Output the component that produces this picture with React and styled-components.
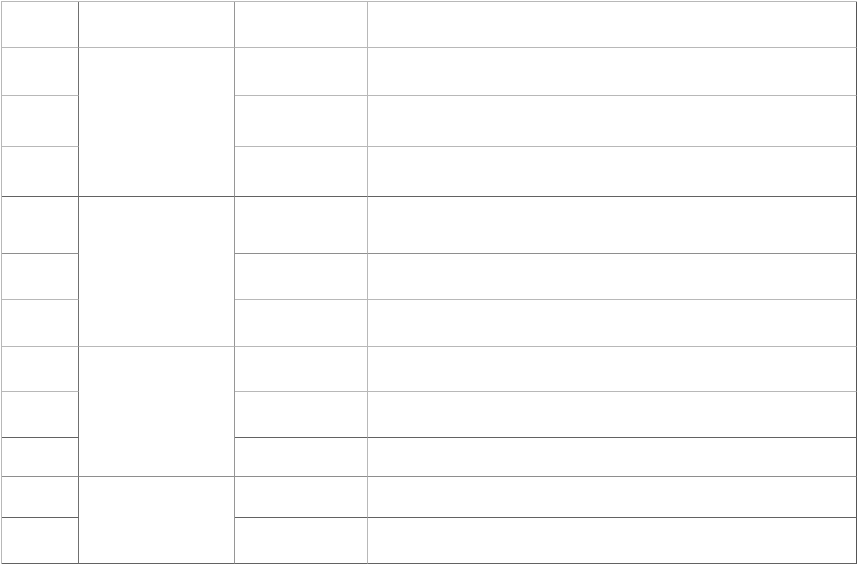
import React from "react";
import styled, { createGlobalStyle } from "styled-components";

const GlobalStyle = createGlobalStyle`
  html, body {
    margin: 0;
    padding: 0;
    background: #ffffff;
    font-family: "Liberation Sans", Arial, sans-serif;
  }
`;

const lineColors = {
  light: "#b8b8b8",
  medium: "#8e8e8e",
  dark: "#626262",
};

const Page = styled.div`
  padding: 1px;
`;

const Grid = styled.div`
  display: grid;
  grid-template-columns: 77px 156px 133px 489px;
  grid-template-rows: 46px 48px 51px 50px 57px 46px 47px 45px 46px 39px 41px 46px;
  width: 856px;
  box-sizing: border-box;
  border-top: 1px solid ${lineColors.light};
  border-left: 1px solid ${lineColors.light};
`;

const colRight = ["#707070", "#969696", lineColors.light, "#555555"];

const Cell = styled.div`
  box-sizing: border-box;
  grid-column: ${(p) => p.$col + 1};
  grid-row: ${(p) => p.$row + 1} / span ${(p) => p.$span || 1};
  border-right: 1px solid ${(p) => colRight[p.$col]};
  border-bottom: 1px solid ${(p) => lineColors[p.$bottom]};
  font-size: 14px;
  color: #222;
`;

// bottom line tone of each of the 12 rows
const rowBottoms = [
  "light", "light", "light", "dark", "medium", "light",
  "light", "light", "dark", "medium", "dark", "dark",
];

// merged cells in the second column: [first row, span]
const groups = [
  [0, 1],
  [1, 3],
  [4, 3],
  [7, 3],
  [10, 2],
];

export default function App() {
  const cells = [];
  rowBottoms.forEach((tone, r) => {
    [0, 2, 3].forEach((c) => {
      cells.push(<Cell key={`${r}-${c}`} $row={r} $col={c} $bottom={tone} />);
    });
  });
  groups.forEach(([start, span]) => {
    cells.push(
      <Cell
        key={`g-${start}`}
        $row={start}
        $col={1}
        $span={span}
        $bottom={rowBottoms[start + span - 1]}
      />
    );
  });

  return (
    <>
      <GlobalStyle />
      <Page>
        <Grid>{cells}</Grid>
      </Page>
    </>
  );
}
